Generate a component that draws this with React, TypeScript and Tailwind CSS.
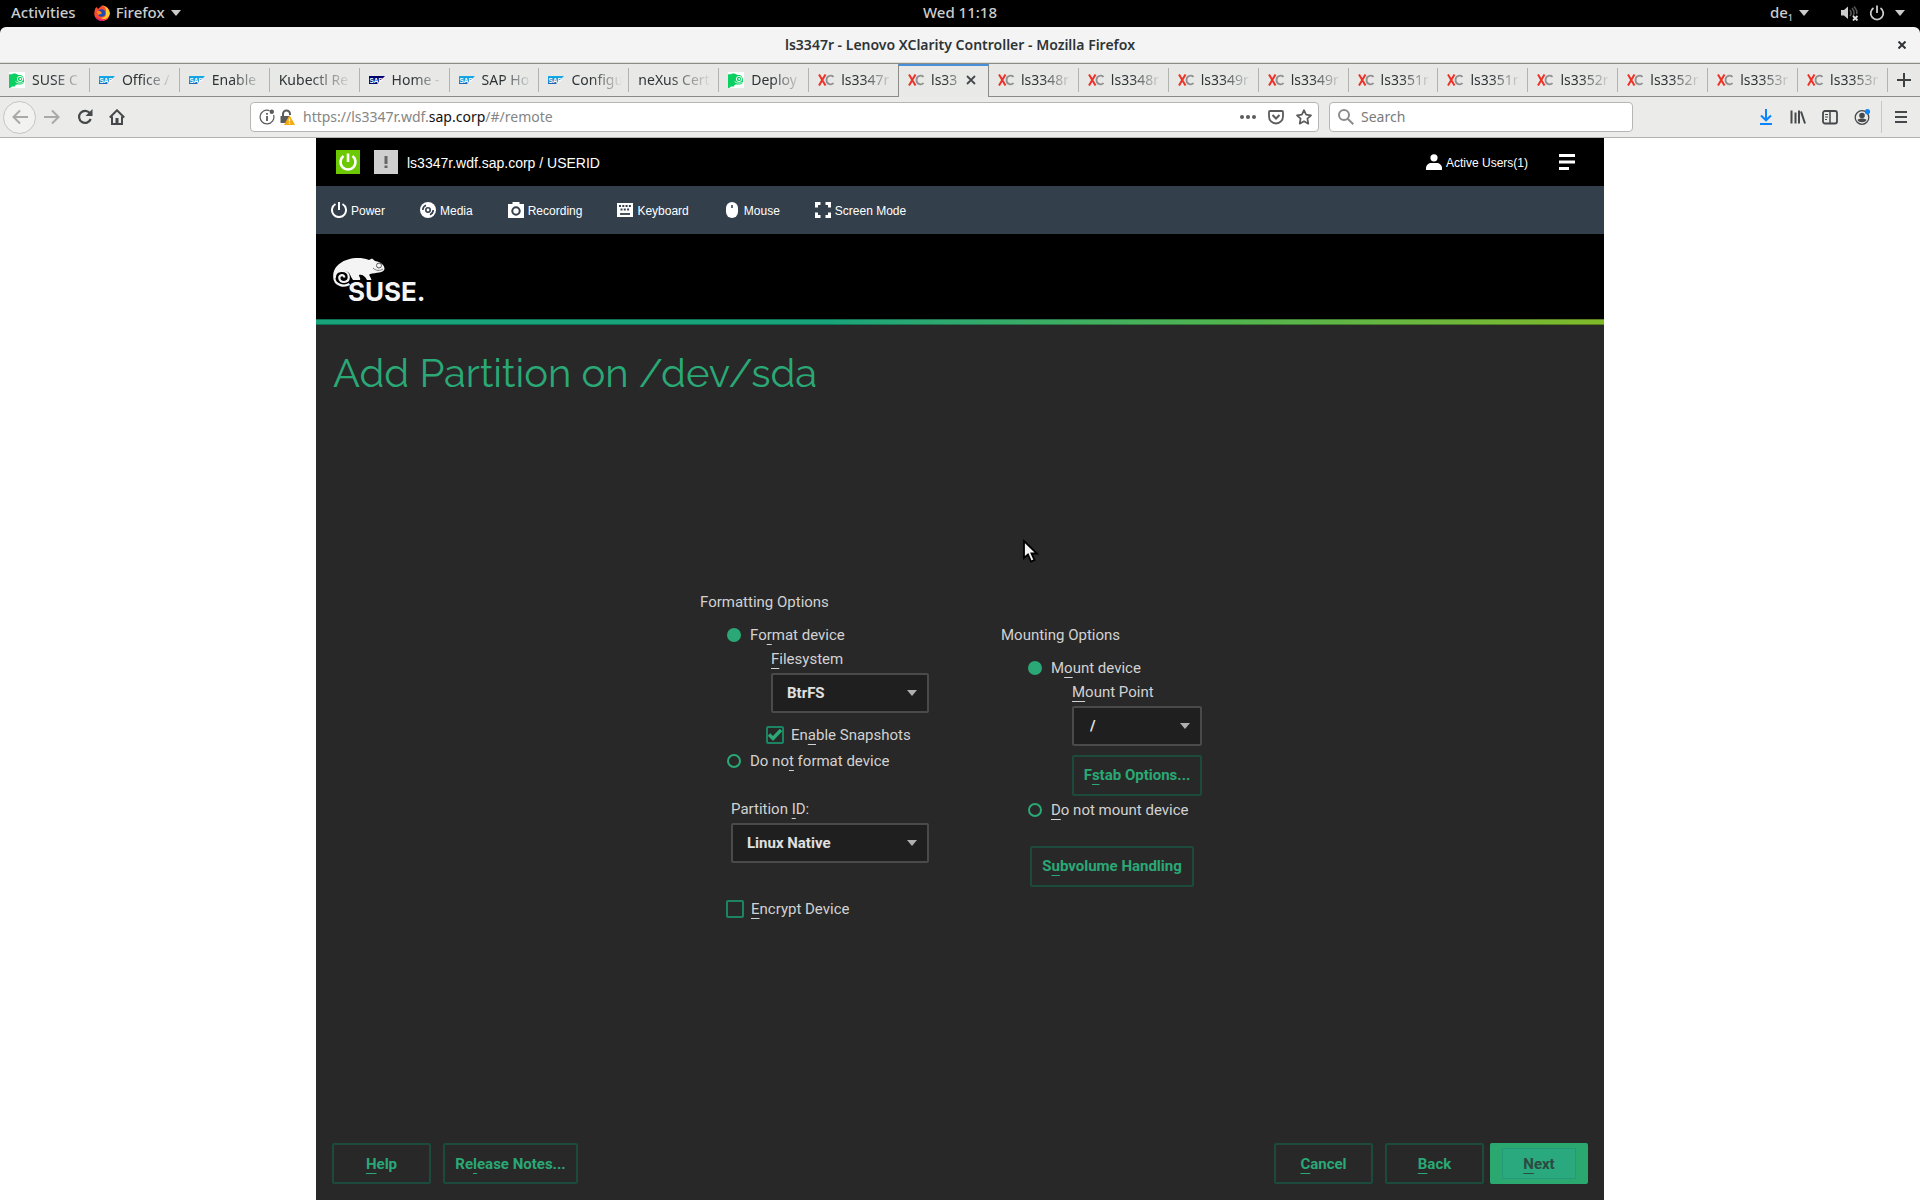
import React, { type ReactNode } from "react";

type Fav = "suse" | "sap" | "sapdark" | "xc" | "none";

const tabs: { icon: Fav; label: string; active?: boolean }[] = [
  { icon: "suse", label: "SUSE C" },
  { icon: "sap", label: "Office /" },
  { icon: "sap", label: "Enable" },
  { icon: "none", label: "Kubectl Re" },
  { icon: "sapdark", label: "Home -" },
  { icon: "sap", label: "SAP Ho" },
  { icon: "sap", label: "Configu" },
  { icon: "none", label: "neXus Cert" },
  { icon: "suse", label: "Deploy" },
  { icon: "xc", label: "ls3347r" },
  { icon: "xc", label: "ls33", active: true },
  { icon: "xc", label: "ls3348r" },
  { icon: "xc", label: "ls3348r" },
  { icon: "xc", label: "ls3349r" },
  { icon: "xc", label: "ls3349r" },
  { icon: "xc", label: "ls3351r" },
  { icon: "xc", label: "ls3351r" },
  { icon: "xc", label: "ls3352r" },
  { icon: "xc", label: "ls3352r" },
  { icon: "xc", label: "ls3353r" },
  { icon: "xc", label: "ls3353r" },
];

function Favicon({ kind }: { kind: Fav }) {
  if (kind === "suse")
    return (
      <svg viewBox="0 0 16 16" className="size-4 shrink-0">
        <rect width="16" height="16" fill="#fff" />
        <path d="M0 2.500 C1.500 1.500 2 3 3.500 2 C5 1 8 2 9.500 3 L12 3 C14 4 15 6 15 9 C15 12 13 12.500 9 12.500 C7 12.500 6 13 6 14.500 H3.500 C2 14.500 2.500 16 0 16 Z" fill="#0ad061" />
        <circle cx="11" cy="7" r="2.700" fill="none" stroke="#fff" strokeWidth=".9" />
        <circle cx="11.300" cy="7" r="1" fill="#fff" />
        <path d="M6.500 9.500 C8.500 11.500 12 11.500 14.500 10.500" stroke="#fff" strokeWidth=".8" fill="none" />
      </svg>
    );
  if (kind === "xc")
    return (
      <svg viewBox="0 0 16 16" className="size-4 shrink-0" fill="none" strokeWidth="1.800">
        <path d="M15.500 5 C14 2.800 8.500 3 8.500 8 S14 13.200 15.500 11" stroke="#8f9192" />
        <path d="M1 2.500 L7.500 13.500 M7.500 2.500 L1 13.500" stroke="#ee3124" strokeWidth="2" />
      </svg>
    );
  const dark = kind === "sapdark";
  return (
    <svg viewBox="0 0 16 16" className="size-4 shrink-0">
      <defs>
        <linearGradient id={kind} x1="0" y1="0" x2="0" y2="1">
          <stop offset="0" stopColor={dark ? "#00006e" : "#12aeea"} />
          <stop offset="1" stopColor={dark ? "#00006e" : "#1e62b8"} />
        </linearGradient>
      </defs>
      <path d="M0 4 H16 L8 12 H0 Z" fill={`url(#${kind})`} />
      <text x="0.5" y="10.500" fontSize="6.500" fontWeight="700" fontFamily="Liberation Sans" fill="#fff">
        SAP
      </text>
    </svg>
  );
}

function Caret({ className }: { className?: string }) {
  return (
    <svg viewBox="0 0 10 6" className={`h-1.5 w-2.5 shrink-0 ${className ?? ""}`}>
      <path d="M0 0 H10 L5 6 Z" fill="currentColor" />
    </svg>
  );
}

function TopBar() {
  return (
    <header className="grid h-[27px] grid-cols-3 items-center bg-black px-[15px] pb-0.5 text-[15px] font-medium text-[#cccccc]">
      <div className="-ml-1 flex items-center gap-[18px]">
        <button>Activities</button>
        <button className="flex items-center gap-1.5">
          <svg viewBox="0 0 16 16" className="size-4">
            <path d="M1 4 L2.500 2 L4 4 L8 .5 C13 1 16 4 15.800 9 C15 14 12 16 8 16 C3 16 0 12 .3 8 Z" fill="#ff4a2e" />
            <path d="M8 .3 C13 3 12 6 12 9 C12 12 9 13 7 12.500 C10 16 15 13 15.800 8.500 C15.500 4 12 1.500 8 .3 Z" fill="#ffcb2d" />
            <path d="M3 12 C6 15.500 10 15 12 13 L9 16 C6 16.500 3.500 15 2 12 Z" fill="#e31587" />
            <circle cx="7.500" cy="8" r="3.800" fill="#2049b8" />
            <path d="M3 6 L6 6 L8 8 C7 9.500 5.500 9 4.500 10 C3.500 9 3 7.500 3 6 Z" fill="#ff8a16" />
          </svg>
          Firefox
          <Caret />
        </button>
      </div>
      <time className="text-center">Wed 11:18</time>
      <div className="flex items-center justify-end">
        <button className="flex items-center gap-1.5">
          <span>
            de<sub className="text-[9px]">1</sub>
          </span>
          <Caret />
        </button>
        <button aria-label="System menu" className="ml-8 flex items-center gap-2.5">
          <svg viewBox="0 0 18 16" className="h-4 w-[18px]" fill="none" stroke="#555">
            <path d="M0 5 H3 L7 1.500 V14 L3 10.500 H0 Z" fill="#ccc" stroke="none" />
            <path d="M9 5 C10.500 7 10.500 9 9 11 M11 3 C13.500 6 13.500 9 12 11 M13 1.500 C16 5 16 8 15.500 9" strokeWidth="1.500" />
            <path d="M12 11 L16.500 15.500 M16.500 11 L12 15.500" stroke="#ddd" strokeWidth="1.800" />
          </svg>
          <svg viewBox="0 0 16 16" className="size-4" fill="none" stroke="currentColor" strokeWidth="1.800">
            <path d="M4.500 3 A6.300 6.300 0 1 0 11.500 3 M8 .5 V8" />
          </svg>
          <Caret />
        </button>
      </div>
    </header>
  );
}

function TabStrip() {
  return (
    <nav
      aria-label="Tabs"
      className="grid h-[34px] grid-cols-[repeat(21,minmax(0,1fr))_32px] border-t border-[#8b8b87] bg-[#e8e8e7] text-sm text-[#2e3436]"
    >
      {tabs.map((t, i) => (
        <div
          key={i}
          className={
            t.active
              ? "-ml-px flex min-w-0 items-center border-x border-t-2 border-x-[#8b8b87] border-t-[#4a90d9] bg-[#e9e9e7] pr-3 pb-[3px]"
              : "flex min-w-0 items-center border-b border-[#8b8b87] pr-1.5"
          }
        >
          <button className="flex min-w-0 flex-1 items-center gap-[7px] pl-[9px]">
            {t.icon !== "none" && <Favicon kind={t.icon} />}
            <span className="min-w-0 flex-1 overflow-hidden mask-r-from-40% text-left whitespace-nowrap">
              {t.label}
            </span>
          </button>
          {t.active ? (
            <button aria-label="Close tab">
              <svg viewBox="0 0 10 10" className="size-2.5" stroke="#45494b" strokeWidth="1.800">
                <path d="M1 1 L9 9 M9 1 L1 9" />
              </svg>
            </button>
          ) : null}
          {!t.active && i !== 9 ? <span className="-mr-1.5 ml-1.5 h-6 w-px bg-[#b3b3b0]" /> : null}
        </div>
      ))}
      <button aria-label="New tab" className="flex items-center justify-center border-b border-[#8b8b87]">
        <svg viewBox="0 0 14 14" className="size-3.5" stroke="#3d4143" strokeWidth="2">
          <path d="M7 0 V14 M0 7 H14" />
        </svg>
      </button>
    </nav>
  );
}

function Toolbar() {
  return (
    <div className="flex h-[41px] items-center border-b border-[#b2b2ae] bg-[#ebebe9] text-[#45494b]">
      <div className="flex w-[250px] shrink-0 items-center pl-[3px]">
        <button aria-label="Back" className="flex size-[33px] items-center justify-center rounded-full border border-[#c4c4c1] bg-[#f2f2f1]">
          <svg viewBox="0 0 16 16" className="size-4" fill="none" stroke="#a9a9a8" strokeWidth="2">
            <path d="M8 1.500 L1.500 8 L8 14.500 M2 8 H16" />
          </svg>
        </button>
        <button aria-label="Forward" className="ml-2">
          <svg viewBox="0 0 16 16" className="size-4" fill="none" stroke="#a9a9a8" strokeWidth="2">
            <path d="M8 1.500 L14.500 8 L8 14.500 M14 8 H0" />
          </svg>
        </button>
        <button aria-label="Reload" className="ml-[17px]">
          <svg viewBox="0 0 16 16" className="size-4" fill="none" stroke="currentColor" strokeWidth="2.200">
            <path d="M13 4.500 A6 6 0 1 0 13.700 10" />
            <path d="M15.500 0 V7 H8.500 Z" fill="currentColor" stroke="none" />
          </svg>
        </button>
        <button aria-label="Home" className="ml-4">
          <svg viewBox="0 0 16 16" className="size-4" fill="none" stroke="currentColor" strokeWidth="2">
            <path d="M.8 8.500 L8 1.300 L15.200 8.500 M3 7.500 V15 H13 V7.500" />
            <path d="M6.500 9 H9.500 V15 H6.500 Z" fill="currentColor" stroke="none" />
          </svg>
        </button>
      </div>
      <div className="flex h-[30px] min-w-0 flex-[1051] items-center rounded border border-[#b6b6b3] bg-white px-2">
        <svg viewBox="0 0 16 16" className="size-4 shrink-0" fill="none" stroke="#5b5b5b">
          <path d="M10.500 1.600 A6.900 6.900 0 1 0 14.600 6" strokeWidth="1.200" />
          <path d="M8 7 V12 M8 4 V5.800" strokeWidth="1.800" />
          <circle cx="12.800" cy="2.800" r="2.200" fill="#5b5b5b" stroke="none" />
        </svg>
        <svg viewBox="0 0 16 16" className="ml-1 size-4 shrink-0">
          <path d="M4 7 V5 A3.500 3.500 0 0 1 11 5 V6" fill="none" stroke="#5b5b5b" strokeWidth="2" />
          <path d="M1.500 7 H11 V14 H1.500 Z" fill="#5b5b5b" />
          <path d="M10.500 6 L16 16 H5 Z" fill="#f6ab0d" />
          <path d="M10.500 9.500 V12.500 M10.500 13.500 V14.700" stroke="#fff" strokeWidth="1.300" />
        </svg>
        <button className="min-w-0 flex-1 truncate pl-2 text-left text-sm text-[#858585]">
          https://ls3347r.wdf.<span className="text-[#101010]">sap.corp</span>/#/remote
        </button>
        <button aria-label="Page actions">
          <svg viewBox="0 0 16 16" className="size-4" fill="#5b5b5b">
            <circle cx="2" cy="8" r="2" />
            <circle cx="8" cy="8" r="2" />
            <circle cx="14" cy="8" r="2" />
          </svg>
        </button>
        <button aria-label="Save to Pocket" className="ml-3">
          <svg viewBox="0 0 16 16" className="size-4" fill="none" stroke="#5b5b5b" strokeWidth="1.800">
            <path d="M2 2 H14 Q15 2 15 3 V7.500 A7 7 0 0 1 1 7.500 V3 Q1 2 2 2 Z" />
            <path d="M4.500 6 L8 9.500 L11.500 6" strokeWidth="2" />
          </svg>
        </button>
        <button aria-label="Bookmark" className="-mr-0.5 ml-3">
          <svg viewBox="0 0 16 16" className="size-4" fill="none" stroke="#5b5b5b" strokeWidth="1.700" strokeLinejoin="round">
            <path d="M8 1.200 L10.100 5.700 L15 6.300 L11.400 9.700 L12.300 14.700 L8 12.300 L3.700 14.700 L4.600 9.700 L1 6.300 L5.900 5.700 Z" />
          </svg>
        </button>
      </div>
      <label className="ml-2.5 flex h-[30px] min-w-0 flex-[286] items-center gap-[7px] rounded border border-[#b6b6b3] bg-white px-2">
        <svg viewBox="0 0 16 16" className="size-4 shrink-0" fill="none" stroke="#8c8c8c" strokeWidth="2">
          <circle cx="6" cy="6" r="5" />
          <path d="M9.700 9.700 L15.300 15.300" />
        </svg>
        <input aria-label="Search" placeholder="Search" className="min-w-0 flex-1 text-sm outline-none placeholder:text-[#7a7a7a]" />
      </label>
      <div className="ml-[125px] flex shrink-0 items-center gap-4">
        <button aria-label="Downloads">
          <svg viewBox="0 0 16 16" className="size-4" fill="none" stroke="#0a84ff" strokeWidth="2">
            <path d="M8 0 V11 M3 6.500 L8 11.300 L13 6.500 M2 15 H14" />
          </svg>
        </button>
        <button aria-label="Library">
          <svg viewBox="0 0 16 16" className="size-4" fill="none" stroke="currentColor" strokeWidth="2">
            <path d="M1.500 1.500 V14.500 M5.500 3.500 V14.500 M9 1.500 V14.500 M11 2.500 L15 14.500" />
          </svg>
        </button>
        <button aria-label="Sidebars">
          <svg viewBox="0 0 16 16" className="size-4" fill="none" stroke="currentColor" strokeWidth="1.800">
            <rect x="1" y="2" width="14" height="12.500" rx="2" />
            <path d="M8 2 V14" strokeWidth="1.500" />
            <path d="M3 5.500 H6 M3 8 H6 M3 10.500 H5" strokeWidth="1" />
          </svg>
        </button>
        <button aria-label="Account">
          <svg viewBox="0 0 16 16" className="size-4" fill="none" stroke="currentColor">
            <circle cx="8" cy="8.500" r="6.800" strokeWidth="1.300" />
            <circle cx="8" cy="6.500" r="2.800" fill="currentColor" stroke="none" />
            <path d="M3.500 11 C5 9 11 9 12.500 11 C11 14 5 14 3.500 11 Z" fill="currentColor" stroke="none" />
            <circle cx="13.500" cy="2.700" r="2.600" fill="#0a84ff" stroke="none" />
          </svg>
        </button>
      </div>
      <button aria-label="Menu" className="ml-[11px] flex h-8 w-[39px] shrink-0 items-center justify-center border-l border-[#c8c8c5]">
        <svg viewBox="0 0 14 14" className="size-3.5" stroke="currentColor" strokeWidth="2">
          <path d="M1 2 H13 M1 7 H13 M1 12 H13" />
        </svg>
      </button>
    </div>
  );
}

const icon = "size-4 shrink-0";
const remoteMenu: { label: string; art: ReactNode }[] = [
  {
    label: "Power",
    art: (
      <svg viewBox="0 0 16 16" className={icon} fill="none" stroke="#fff" strokeWidth="2">
        <path d="M4.500 2 A7 7 0 1 0 11.500 2 M8 0 V8" />
      </svg>
    ),
  },
  {
    label: "Media",
    art: (
      <svg viewBox="0 0 16 16" className={icon}>
        <circle cx="8" cy="8" r="8" fill="#fff" />
        <circle cx="8" cy="8" r="2.200" fill="none" stroke="#33404c" strokeWidth="1.600" />
        <path d="M2.800 8 A5.200 5.200 0 0 1 6 3.200 M13.200 8 A5.200 5.200 0 0 1 10 12.800" fill="none" stroke="#33404c" strokeWidth="1.600" />
      </svg>
    ),
  },
  {
    label: "Recording",
    art: (
      <svg viewBox="0 0 16 16" className={icon}>
        <path d="M0 2 H4.500 V0 H11.500 V2 H16 V16 H0 Z" fill="#fff" />
        <circle cx="8" cy="9" r="3.700" fill="none" stroke="#33404c" strokeWidth="2" />
      </svg>
    ),
  },
  {
    label: "Keyboard",
    art: (
      <svg viewBox="0 0 16 16" className={icon}>
        <path d="M0 1 H16 V15 H0 Z" fill="#fff" />
        <path d="M2 4 H14 M3.500 7.500 H13" stroke="#33404c" strokeWidth="1.800" strokeDasharray="2 1.300" />
        <path d="M3 12 H13" stroke="#33404c" strokeWidth="1.800" />
      </svg>
    ),
  },
  {
    label: "Mouse",
    art: (
      <svg viewBox="0 0 16 16" className={icon}>
        <rect x="2" y="0" width="12" height="16" rx="6" fill="#fff" />
        <path d="M8 3 V6" stroke="#33404c" strokeWidth="1.600" />
      </svg>
    ),
  },
  {
    label: "Screen Mode",
    art: (
      <svg viewBox="0 0 16 16" className={icon} fill="none" stroke="#fff" strokeWidth="3">
        <path d="M1.500 5.500 V1.500 H5.500 M10.500 1.500 H14.500 V5.500 M14.500 10.500 V14.500 H10.500 M5.500 14.500 H1.500 V10.500" />
      </svg>
    ),
  },
];

function RemoteHeader() {
  return (
    <div className="font-['Liberation_Sans',sans-serif] text-white">
      <div className="flex h-12 items-center bg-black pr-[29px] pl-5">
        <svg viewBox="0 0 24 24" className="size-6 shrink-0" fill="none" stroke="#fff" strokeWidth="2.600">
          <rect width="24" height="24" fill="#6cc800" stroke="none" />
          <path d="M7.500 6 A7.500 7.500 0 1 0 16.500 6 M12 3.500 V12" />
        </svg>
        <svg viewBox="0 0 24 24" className="ml-3.5 size-6 shrink-0" stroke="#666" strokeWidth="3">
          <rect width="24" height="24" fill="#cfcfcf" stroke="none" />
          <path d="M12 6 V14 M12 15.500 V18" />
        </svg>
        <span className="ml-[9px] flex-1 pt-0.5 text-sm">ls3347r.wdf.sap.corp / USERID</span>
        <button className="flex items-center gap-1 text-xs">
          <svg viewBox="0 0 16 16" className="size-4" fill="#fff">
            <circle cx="8" cy="3.800" r="3.600" />
            <path d="M0 16 V14 C0 11 3 9 5 9 H11 C13 9 16 11 16 14 V16 Z" />
          </svg>
          <span className="pt-0.5">Active Users(1)</span>
        </button>
        <button aria-label="Menu" className="ml-[31px]">
          <svg viewBox="0 0 16 16" className="size-4" stroke="#fff" strokeWidth="2.800">
            <path d="M0 1.500 H16 M0 8 H16 M0 14.500 H10" />
          </svg>
        </button>
      </div>
      <nav aria-label="Remote console" className="flex h-12 items-center gap-[35px] bg-[#33404c] px-[15px] text-xs">
        {remoteMenu.map((m) => (
          <button key={m.label} className="flex items-center gap-1">
            {m.art}
            <span className="pt-0.5">{m.label}</span>
          </button>
        ))}
      </nav>
    </div>
  );
}

function SuseLogo() {
  return (
    <svg viewBox="0 0 96 46" className="h-[46px] w-24 overflow-visible" role="img" aria-label="SUSE">
      <path
        d="M1.500 19 C0 8 12 0 26 0 C30 0 33 .5 37 2 L40 .5 L43 3 C49 4 52.500 7 52.500 11 C52 15 44 14.500 38 16 C36 17 39 19 39.500 22 L35 22 C33 18 30 16 27 17 C27 19 29 20 28 22 H21 C19 19 18.500 17 17 15 C14 12 9 12 6 14.500 C4 16.500 4 18 4 20 Z"
        fill="#f4f4f4"
      />
      <path
        d="M17.500 26 C12 29.500 2.500 27 2.300 19.500 C2.300 11 16.500 10.500 16.800 19 C16.800 25.500 7.500 25.500 7.300 20 C7.300 16.500 12.200 16 12.300 19.500"
        fill="none"
        stroke="#f4f4f4"
        strokeWidth="2.200"
      />
      <circle cx="47" cy="7.500" r="2.500" fill="none" stroke="#555" strokeWidth="1" />
      <path d="M41 10 C44 13 48 13 51 11" fill="none" stroke="#777" strokeWidth="1" />
      <text x="16" y="43" fontFamily="Inter" fontWeight="700" fontSize="26" fill="#f4f4f4">
        SUSE.
      </text>
    </svg>
  );
}

function Key({ children }: { children: ReactNode }) {
  return <span className="underline decoration-1 underline-offset-4">{children}</span>;
}

function Radio({ name, checked, children }: { name: string; checked?: boolean; children: ReactNode }) {
  return (
    <label className="flex h-6 items-center gap-[9px] pl-[27px]">
      <input
        type="radio"
        name={name}
        defaultChecked={checked}
        className="size-3.5 appearance-none rounded-full border-2 border-[#2aa876] checked:bg-[#2aa876]"
      />
      <span>{children}</span>
    </label>
  );
}

function Check({ checked, children }: { checked?: boolean; children: ReactNode }) {
  return (
    <label className="flex h-6 items-center gap-[7px]">
      <span className="grid size-[18px] place-items-center">
        <input
          type="checkbox"
          defaultChecked={checked}
          className="peer col-start-1 row-start-1 size-[18px] appearance-none rounded-xs border-2 border-[#1a8463]"
        />
        <svg viewBox="0 0 14 14" className="pointer-events-none col-start-1 row-start-1 hidden size-3.5 peer-checked:block" fill="none" stroke="#2aa876" strokeWidth="3.400">
          <path d="M1 6.500 L5 10.500 L13 2" />
        </svg>
      </span>
      <span>{children}</span>
    </label>
  );
}

function Select({ id, value, pad }: { id: string; value: string; pad?: string }) {
  return (
    <div className="grid items-center text-[#e0e0e0]">
      <select
        id={id}
        defaultValue={value}
        className={`col-start-1 row-start-1 h-10 w-full appearance-none rounded-xs border-2 border-[#4a4a4a] bg-[#1f1f1f] font-bold ${pad ?? "pl-3.5"}`}
      >
        <option>{value}</option>
      </select>
      <Caret className="pointer-events-none col-start-1 row-start-1 mr-3 justify-self-end text-[#b0b0b0]" />
    </div>
  );
}

const outline =
  "flex h-[41px] items-center justify-center rounded-xs border-2 border-[#1c4a3d] font-bold whitespace-nowrap text-[#2aa876]";

function PartitionForm() {
  return (
    <form className="mx-auto flex w-full max-w-[520px] items-start justify-between pb-[30px] text-[#d2d2d2]">
      <fieldset className="w-[229px]">
        <legend className="h-6">Formatting Options</legend>
        <div className="pt-[9px]">
          <Radio name="format" checked>
            Fo<Key>r</Key>mat device
          </Radio>
        </div>
        <div className="pl-[71px]">
          <label htmlFor="fs" className="block h-6">
            <Key>F</Key>ilesystem
          </label>
          <div className="pt-0.5">
            <Select id="fs" value="BtrFS" />
          </div>
        </div>
        <div className="pt-2.5 pb-0.5 pl-[66px]">
          <Check checked>
            En<Key>a</Key>ble Snapshots
          </Check>
        </div>
        <Radio name="format">
          Do no<Key>t</Key> format device
        </Radio>
        <div className="pt-6 pl-[31px]">
          <label htmlFor="pid" className="block h-6">
            Partition <Key>I</Key>D:
          </label>
          <div className="pt-0.5">
            <Select id="pid" value="Linux Native" />
          </div>
        </div>
        <div className="pt-[34px] pl-[26px]">
          <Check>
            <Key>E</Key>ncrypt Device
          </Check>
        </div>
      </fieldset>
      <fieldset className="w-[219px] pt-[33px]">
        <legend className="contents">
          <span className="block h-6">Mounting Options</span>
        </legend>
        <div className="pt-[9px]">
          <Radio name="mount" checked>
            M<Key>o</Key>unt device
          </Radio>
        </div>
        <div className="w-[201px] pl-[71px]">
          <label htmlFor="mp" className="block h-6">
            <Key>M</Key>ount Point
          </label>
          <div className="pt-0.5 pb-[9px]">
            <Select id="mp" value="/" pad="pl-4" />
          </div>
          <button type="button" className={`${outline} w-full`}>
            <span>
              F<Key>s</Key>tab Options...
            </span>
          </button>
        </div>
        <div className="pt-0.5 pb-6">
          <Radio name="mount">
            <Key>D</Key>o not mount device
          </Radio>
        </div>
        <button type="button" className={`${outline} ml-[29px] w-[164px]`}>
          <span>
            S<Key>u</Key>bvolume Handling
          </span>
        </button>
      </fieldset>
    </form>
  );
}

export default function App() {
  return (
    <div className="flex min-h-screen flex-col bg-white font-['Noto_Sans','Open_Sans',sans-serif]">
      <TopBar />
      <div className="bg-black">
        <div className="grid h-9 grid-cols-[1fr_auto_1fr] items-center rounded-t-md border-b border-[#dcdcd8] bg-[#f4f4f4] px-3.5">
          <h1 className="col-start-2 text-sm font-semibold text-[#2e3436]">
            ls3347r - Lenovo XClarity Controller - Mozilla Firefox
          </h1>
          <button aria-label="Close window" className="justify-self-end">
            <svg viewBox="0 0 8 8" className="size-2" stroke="#2e3436" strokeWidth="2">
              <path d="M.5 .5 L7.500 7.500 M7.500 .5 L.5 7.500" />
            </svg>
          </button>
        </div>
      </div>
      <TabStrip />
      <Toolbar />
      <main className="mx-auto flex w-full max-w-[1288px] flex-1 flex-col bg-[#282828]">
        <RemoteHeader />
        <div className="flex h-[85px] items-start bg-black pt-6 pl-4">
          <SuseLogo />
        </div>
        <div className="h-1.5 border-y border-black/30 bg-linear-to-r from-[#18a47a] from-40% via-[#4fb34f] via-70% to-[#7fb928]" />
        <div className="flex flex-1 flex-col px-4 pt-6 pb-4 font-['Roboto',sans-serif] text-[15px] leading-6 text-[#2aa876]">
          <h2 className="pl-px font-['Raleway','Lato',sans-serif] text-[40px] leading-[48px] font-normal">
            Add Partition on /dev/sda
          </h2>
          <div className="flex flex-1 items-center">
            <PartitionForm />
          </div>
          <footer className="flex items-center gap-3">
            <button className={`${outline} w-[99px]`}>
              <span>
                <Key>H</Key>elp
              </span>
            </button>
            <button className={`${outline} w-[135px]`}>
              <span>
                Re<Key>l</Key>ease Notes...
              </span>
            </button>
            <span className="flex-1" />
            <button className={`${outline} w-[99px]`}>
              <span>
                <Key>C</Key>ancel
              </span>
            </button>
            <button className={`${outline} w-[99px]`}>
              <span>
                <Key>B</Key>ack
              </span>
            </button>
            <button className="-ml-1.5 h-[41px] w-[98px] rounded-xs bg-[#2aa870] px-3 py-[5px] font-bold text-[#2c4a41]">
              <span className="block h-full border border-[#249a78] bg-[#2aa87e] leading-[30px]">
                <Key>N</Key>ext
              </span>
            </button>
          </footer>
        </div>
      </main>
      <svg viewBox="0 0 18 26" className="pointer-events-none absolute top-[539px] left-[1022px] h-[26px] w-[18px]">
        <path d="M2 2 V19 L6 15.500 L9 22.500 L12.500 21 L9.500 14.500 H15 Z" fill="#f4f4f4" stroke="#000" strokeWidth="1.800" />
      </svg>
    </div>
  );
}
